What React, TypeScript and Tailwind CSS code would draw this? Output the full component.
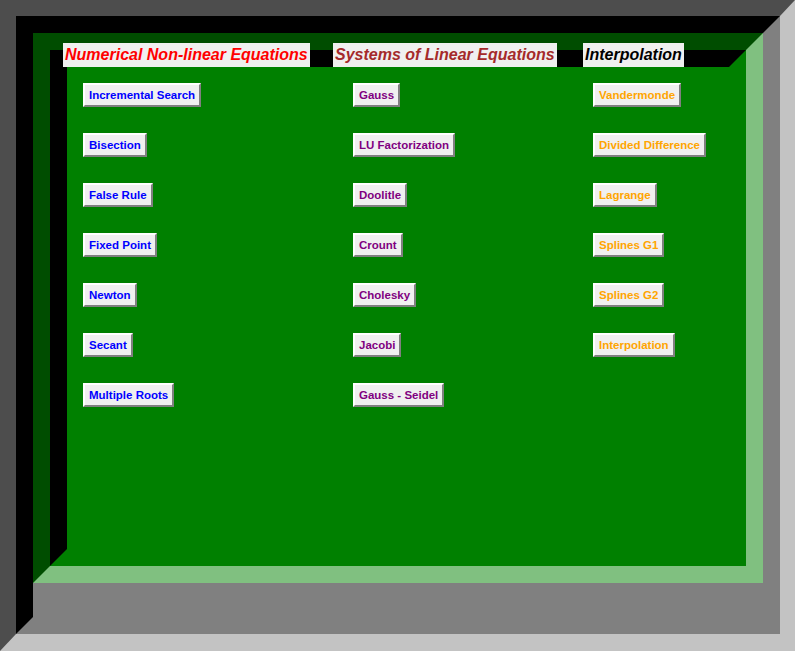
import React from "react";

const font = { fontFamily: '"Liberation Sans", Arial, sans-serif' };

function Btn({ label, color }: { label: string; color: string }) {
  return (
    <div
      className={`h-[24px] w-fit px-[4px] flex items-center leading-[20px] text-[11.5px] font-bold bg-[#f0f0f0] border-2 border-t-[#ffffff] border-l-[#ffffff] border-r-[#808080] border-b-[#808080] ${color}`}
    >
      {label}
    </div>
  );
}

function Heading({ label, color }: { label: string; color: string }) {
  return (
    <div className={`h-[24px] w-fit px-[2px] leading-[24px] text-[16px] font-bold italic bg-[#f0f0f0] ${color}`}>
      {label}
    </div>
  );
}

function Column({
  title,
  titleColor,
  items,
  itemColor,
  width,
  indent,
}: {
  title: string;
  titleColor: string;
  items: string[];
  itemColor: string;
  width: string;
  indent: string;
}) {
  return (
    <div className={`flex flex-col ${width}`}>
      <Heading label={title} color={titleColor} />
      <div className={`flex flex-col gap-[26px] mt-[16px] ${indent}`}>
        {items.map((it) => (
          <Btn key={it} label={it} color={itemColor} />
        ))}
      </div>
    </div>
  );
}

export default function App() {
  return (
    <div style={font} className="w-[795px] h-[651px] overflow-hidden">
      <div className="w-full h-full border-solid border-t-[16px] border-l-[16px] border-r-[15px] border-b-[17px] border-t-[#4d4d4d] border-l-[#4d4d4d] border-r-[#c3c3c3] border-b-[#c3c3c3] bg-[#808080]">
        <div className="w-full h-full border-[17px] border-t-black border-l-black border-r-[#808080] border-b-[#808080] bg-[#808080]">
          <div className="w-full h-[550px] border-[17px] border-t-[#004d00] border-l-[#004d00] border-r-[#80c080] border-b-[#80c080]">
            <div className="w-full h-full border-[17px] border-t-black border-l-black border-r-[#008000] border-b-[#008000] bg-[#008000]">
              <div className="flex -mt-[24px] -ml-[4px]">
                <Column
                  title="Numerical Non-linear Equations"
                  titleColor="text-[#ff0000]"
                  items={[
                    "Incremental Search",
                    "Bisection",
                    "False Rule",
                    "Fixed Point",
                    "Newton",
                    "Secant",
                    "Multiple Roots",
                  ]}
                  itemColor="text-[#0000ff]"
                  width="w-[270px]"
                  indent="ml-[20px]"
                />
                <Column
                  title="Systems of Linear Equations"
                  titleColor="text-[#a52a2a]"
                  items={[
                    "Gauss",
                    "LU Factorization",
                    "Doolitle",
                    "Crount",
                    "Cholesky",
                    "Jacobi",
                    "Gauss - Seidel",
                  ]}
                  itemColor="text-[#800080]"
                  width="w-[250px]"
                  indent="ml-[20px]"
                />
                <Column
                  title="Interpolation"
                  titleColor="text-black"
                  items={[
                    "Vandermonde",
                    "Divided Difference",
                    "Lagrange",
                    "Splines G1",
                    "Splines G2",
                    "Interpolation",
                  ]}
                  itemColor="text-[#ffa500]"
                  width="w-[140px]"
                  indent="ml-[10px]"
                />
              </div>
            </div>
          </div>
        </div>
      </div>
    </div>
  );
}
